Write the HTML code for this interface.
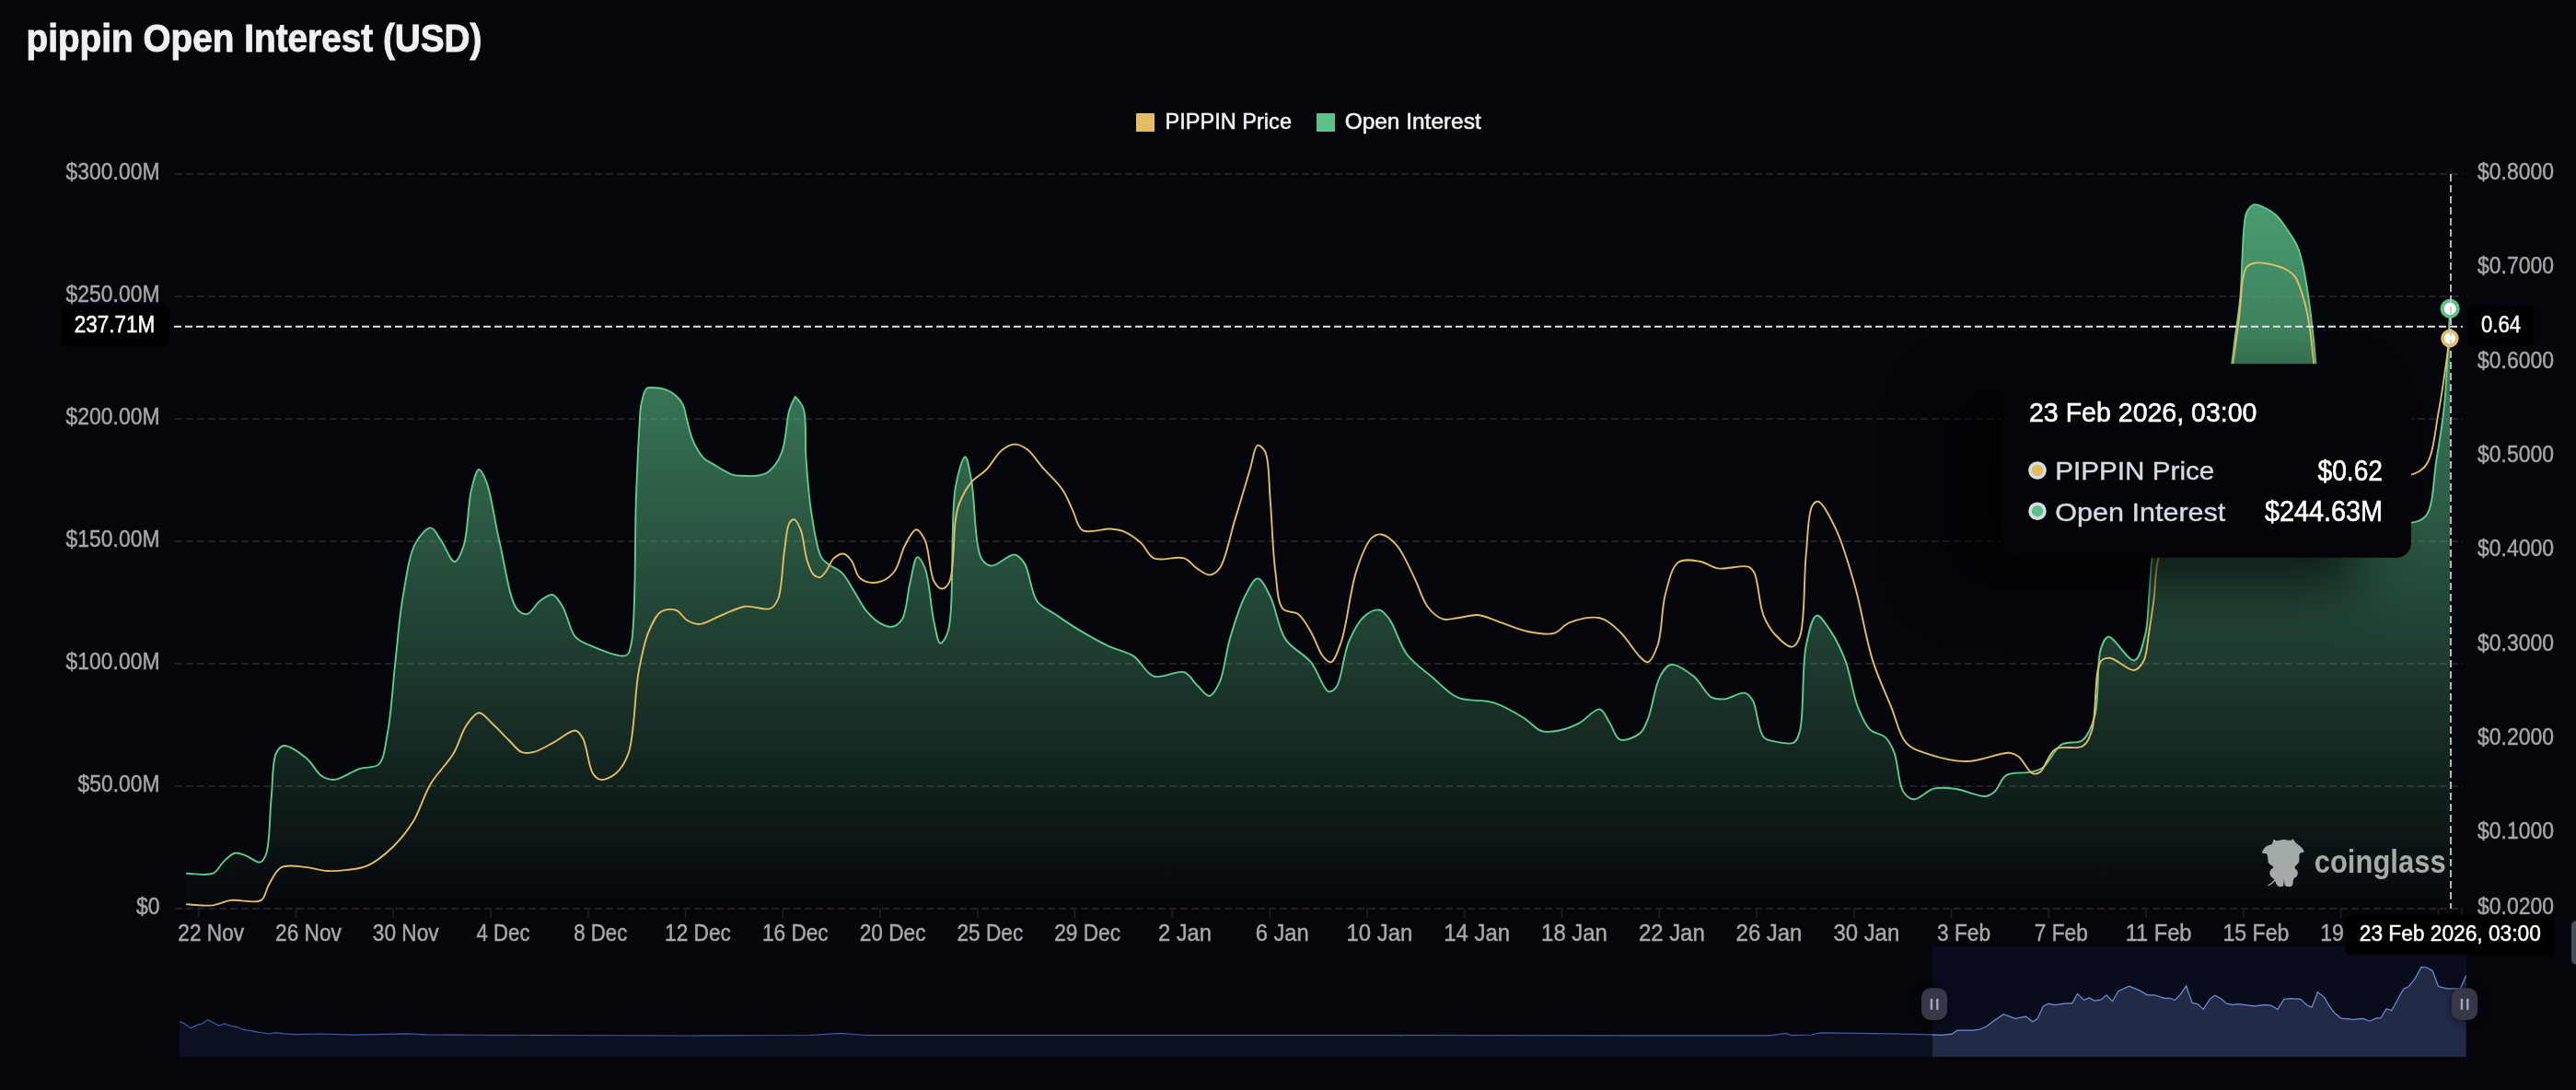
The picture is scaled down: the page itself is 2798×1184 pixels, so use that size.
<!DOCTYPE html><html><head><meta charset="utf-8"><title>pippin Open Interest (USD)</title><style>html,body{margin:0;padding:0;background:#05060b;width:2798px;height:1184px;overflow:hidden}svg{display:block}text{font-family:"Liberation Sans", sans-serif}</style></head><body><div style="will-change:transform;width:2798px;height:1184px"><svg width="2798" height="1184" viewBox="0 0 2798 1184"><defs><linearGradient id="oig" gradientUnits="userSpaceOnUse" x1="0" y1="222" x2="0" y2="987"><stop offset="0" stop-color="#5bc189" stop-opacity="0.8"/><stop offset="1" stop-color="#5bc189" stop-opacity="0"/></linearGradient><filter id="tts" x="-50%" y="-80%" width="200%" height="260%"><feGaussianBlur stdDeviation="32"/></filter><filter id="hs" x="-50%" y="-50%" width="200%" height="200%"><feGaussianBlur stdDeviation="5"/></filter><clipPath id="plotclip"><rect x="190" y="150" width="2472" height="840"/></clipPath></defs><rect x="0" y="0" width="2798" height="1184" fill="#05060b"/><text x="28.5" y="56.2" font-size="42.5" font-weight="700" fill="#eef0f5" stroke="#eef0f5" stroke-width="0.9" textLength="495" lengthAdjust="spacingAndGlyphs">pippin Open Interest (USD)</text><rect x="1234" y="123" width="20" height="20" rx="0.5" fill="#e3bd63"/><text x="1265.5" y="140" font-size="23.6" fill="#f4f4f4" stroke="#f4f4f4" stroke-width="0.5" textLength="137.5" lengthAdjust="spacingAndGlyphs">PIPPIN Price</text><rect x="1430" y="123" width="20" height="20" rx="0.5" fill="#5bc189"/><text x="1460.7" y="140" font-size="23.6" fill="#f4f4f4" stroke="#f4f4f4" stroke-width="0.5" textLength="148" lengthAdjust="spacingAndGlyphs">Open Interest</text><line x1="190" y1="189" x2="2675" y2="189" stroke="#202226" stroke-width="2" stroke-dasharray="8 4"/><line x1="190" y1="322" x2="2675" y2="322" stroke="#202226" stroke-width="2" stroke-dasharray="8 4"/><line x1="190" y1="455" x2="2675" y2="455" stroke="#202226" stroke-width="2" stroke-dasharray="8 4"/><line x1="190" y1="588" x2="2675" y2="588" stroke="#202226" stroke-width="2" stroke-dasharray="8 4"/><line x1="190" y1="721" x2="2675" y2="721" stroke="#202226" stroke-width="2" stroke-dasharray="8 4"/><line x1="190" y1="854" x2="2675" y2="854" stroke="#202226" stroke-width="2" stroke-dasharray="8 4"/><line x1="190" y1="987" x2="2675" y2="987" stroke="#202226" stroke-width="2" stroke-dasharray="8 4"/><text x="173.5" y="195.2" font-size="25.3" fill="#a6a6a6" stroke="#a6a6a6" stroke-width="0.45" text-anchor="end" textLength="102" lengthAdjust="spacingAndGlyphs">$300.00M</text><text x="173.5" y="328.2" font-size="25.3" fill="#a6a6a6" stroke="#a6a6a6" stroke-width="0.45" text-anchor="end" textLength="102" lengthAdjust="spacingAndGlyphs">$250.00M</text><text x="173.5" y="461.2" font-size="25.3" fill="#a6a6a6" stroke="#a6a6a6" stroke-width="0.45" text-anchor="end" textLength="102" lengthAdjust="spacingAndGlyphs">$200.00M</text><text x="173.5" y="594.2" font-size="25.3" fill="#a6a6a6" stroke="#a6a6a6" stroke-width="0.45" text-anchor="end" textLength="102" lengthAdjust="spacingAndGlyphs">$150.00M</text><text x="173.5" y="727.2" font-size="25.3" fill="#a6a6a6" stroke="#a6a6a6" stroke-width="0.45" text-anchor="end" textLength="102" lengthAdjust="spacingAndGlyphs">$100.00M</text><text x="173.5" y="860.2" font-size="25.3" fill="#a6a6a6" stroke="#a6a6a6" stroke-width="0.45" text-anchor="end" textLength="89" lengthAdjust="spacingAndGlyphs">$50.00M</text><text x="173.5" y="993.2" font-size="25.3" fill="#a6a6a6" stroke="#a6a6a6" stroke-width="0.45" text-anchor="end" textLength="25.6" lengthAdjust="spacingAndGlyphs">$0</text><text x="2691" y="194.8" font-size="25.3" fill="#a6a6a6" stroke="#a6a6a6" stroke-width="0.45" textLength="83" lengthAdjust="spacingAndGlyphs">$0.8000</text><text x="2691" y="297.2" font-size="25.3" fill="#a6a6a6" stroke="#a6a6a6" stroke-width="0.45" textLength="83" lengthAdjust="spacingAndGlyphs">$0.7000</text><text x="2691" y="399.5" font-size="25.3" fill="#a6a6a6" stroke="#a6a6a6" stroke-width="0.45" textLength="83" lengthAdjust="spacingAndGlyphs">$0.6000</text><text x="2691" y="501.9" font-size="25.3" fill="#a6a6a6" stroke="#a6a6a6" stroke-width="0.45" textLength="83" lengthAdjust="spacingAndGlyphs">$0.5000</text><text x="2691" y="604.2" font-size="25.3" fill="#a6a6a6" stroke="#a6a6a6" stroke-width="0.45" textLength="83" lengthAdjust="spacingAndGlyphs">$0.4000</text><text x="2691" y="706.6" font-size="25.3" fill="#a6a6a6" stroke="#a6a6a6" stroke-width="0.45" textLength="83" lengthAdjust="spacingAndGlyphs">$0.3000</text><text x="2691" y="809" font-size="25.3" fill="#a6a6a6" stroke="#a6a6a6" stroke-width="0.45" textLength="83" lengthAdjust="spacingAndGlyphs">$0.2000</text><text x="2691" y="911.3" font-size="25.3" fill="#a6a6a6" stroke="#a6a6a6" stroke-width="0.45" textLength="83" lengthAdjust="spacingAndGlyphs">$0.1000</text><text x="2691" y="993.2" font-size="25.3" fill="#a6a6a6" stroke="#a6a6a6" stroke-width="0.45" textLength="83" lengthAdjust="spacingAndGlyphs">$0.0200</text><line x1="215.7" y1="987" x2="215.7" y2="997" stroke="#1f2127" stroke-width="1.6"/><line x1="321.5" y1="987" x2="321.5" y2="997" stroke="#1f2127" stroke-width="1.6"/><line x1="427.2" y1="987" x2="427.2" y2="997" stroke="#1f2127" stroke-width="1.6"/><line x1="533" y1="987" x2="533" y2="997" stroke="#1f2127" stroke-width="1.6"/><line x1="638.8" y1="987" x2="638.8" y2="997" stroke="#1f2127" stroke-width="1.6"/><line x1="744.5" y1="987" x2="744.5" y2="997" stroke="#1f2127" stroke-width="1.6"/><line x1="850.3" y1="987" x2="850.3" y2="997" stroke="#1f2127" stroke-width="1.6"/><line x1="956.1" y1="987" x2="956.1" y2="997" stroke="#1f2127" stroke-width="1.6"/><line x1="1061.9" y1="987" x2="1061.9" y2="997" stroke="#1f2127" stroke-width="1.6"/><line x1="1167.6" y1="987" x2="1167.6" y2="997" stroke="#1f2127" stroke-width="1.6"/><line x1="1273.4" y1="987" x2="1273.4" y2="997" stroke="#1f2127" stroke-width="1.6"/><line x1="1379.2" y1="987" x2="1379.2" y2="997" stroke="#1f2127" stroke-width="1.6"/><line x1="1484.9" y1="987" x2="1484.9" y2="997" stroke="#1f2127" stroke-width="1.6"/><line x1="1590.7" y1="987" x2="1590.7" y2="997" stroke="#1f2127" stroke-width="1.6"/><line x1="1696.5" y1="987" x2="1696.5" y2="997" stroke="#1f2127" stroke-width="1.6"/><line x1="1802.2" y1="987" x2="1802.2" y2="997" stroke="#1f2127" stroke-width="1.6"/><line x1="1908" y1="987" x2="1908" y2="997" stroke="#1f2127" stroke-width="1.6"/><line x1="2013.8" y1="987" x2="2013.8" y2="997" stroke="#1f2127" stroke-width="1.6"/><line x1="2119.6" y1="987" x2="2119.6" y2="997" stroke="#1f2127" stroke-width="1.6"/><line x1="2225.3" y1="987" x2="2225.3" y2="997" stroke="#1f2127" stroke-width="1.6"/><line x1="2331.1" y1="987" x2="2331.1" y2="997" stroke="#1f2127" stroke-width="1.6"/><line x1="2436.9" y1="987" x2="2436.9" y2="997" stroke="#1f2127" stroke-width="1.6"/><line x1="2542.6" y1="987" x2="2542.6" y2="997" stroke="#1f2127" stroke-width="1.6"/><line x1="2648.4" y1="987" x2="2648.4" y2="997" stroke="#1f2127" stroke-width="1.6"/><line x1="2674" y1="987" x2="2674" y2="997" stroke="#1f2127" stroke-width="1.6"/><text x="229.2" y="1021.7" font-size="25" fill="#a8a8a8" stroke="#a8a8a8" stroke-width="0.45" text-anchor="middle" textLength="71.8" lengthAdjust="spacingAndGlyphs">22 Nov</text><text x="335" y="1021.7" font-size="25" fill="#a8a8a8" stroke="#a8a8a8" stroke-width="0.45" text-anchor="middle" textLength="71.8" lengthAdjust="spacingAndGlyphs">26 Nov</text><text x="440.7" y="1021.7" font-size="25" fill="#a8a8a8" stroke="#a8a8a8" stroke-width="0.45" text-anchor="middle" textLength="71.8" lengthAdjust="spacingAndGlyphs">30 Nov</text><text x="546.5" y="1021.7" font-size="25" fill="#a8a8a8" stroke="#a8a8a8" stroke-width="0.45" text-anchor="middle" textLength="58" lengthAdjust="spacingAndGlyphs">4 Dec</text><text x="652.3" y="1021.7" font-size="25" fill="#a8a8a8" stroke="#a8a8a8" stroke-width="0.45" text-anchor="middle" textLength="58" lengthAdjust="spacingAndGlyphs">8 Dec</text><text x="758" y="1021.7" font-size="25" fill="#a8a8a8" stroke="#a8a8a8" stroke-width="0.45" text-anchor="middle" textLength="71.8" lengthAdjust="spacingAndGlyphs">12 Dec</text><text x="863.8" y="1021.7" font-size="25" fill="#a8a8a8" stroke="#a8a8a8" stroke-width="0.45" text-anchor="middle" textLength="71.8" lengthAdjust="spacingAndGlyphs">16 Dec</text><text x="969.6" y="1021.7" font-size="25" fill="#a8a8a8" stroke="#a8a8a8" stroke-width="0.45" text-anchor="middle" textLength="71.8" lengthAdjust="spacingAndGlyphs">20 Dec</text><text x="1075.4" y="1021.7" font-size="25" fill="#a8a8a8" stroke="#a8a8a8" stroke-width="0.45" text-anchor="middle" textLength="71.8" lengthAdjust="spacingAndGlyphs">25 Dec</text><text x="1181.1" y="1021.7" font-size="25" fill="#a8a8a8" stroke="#a8a8a8" stroke-width="0.45" text-anchor="middle" textLength="71.8" lengthAdjust="spacingAndGlyphs">29 Dec</text><text x="1286.9" y="1021.7" font-size="25" fill="#a8a8a8" stroke="#a8a8a8" stroke-width="0.45" text-anchor="middle" textLength="58" lengthAdjust="spacingAndGlyphs">2 Jan</text><text x="1392.7" y="1021.7" font-size="25" fill="#a8a8a8" stroke="#a8a8a8" stroke-width="0.45" text-anchor="middle" textLength="58" lengthAdjust="spacingAndGlyphs">6 Jan</text><text x="1498.4" y="1021.7" font-size="25" fill="#a8a8a8" stroke="#a8a8a8" stroke-width="0.45" text-anchor="middle" textLength="71.8" lengthAdjust="spacingAndGlyphs">10 Jan</text><text x="1604.2" y="1021.7" font-size="25" fill="#a8a8a8" stroke="#a8a8a8" stroke-width="0.45" text-anchor="middle" textLength="71.8" lengthAdjust="spacingAndGlyphs">14 Jan</text><text x="1710" y="1021.7" font-size="25" fill="#a8a8a8" stroke="#a8a8a8" stroke-width="0.45" text-anchor="middle" textLength="71.8" lengthAdjust="spacingAndGlyphs">18 Jan</text><text x="1815.8" y="1021.7" font-size="25" fill="#a8a8a8" stroke="#a8a8a8" stroke-width="0.45" text-anchor="middle" textLength="71.8" lengthAdjust="spacingAndGlyphs">22 Jan</text><text x="1921.5" y="1021.7" font-size="25" fill="#a8a8a8" stroke="#a8a8a8" stroke-width="0.45" text-anchor="middle" textLength="71.8" lengthAdjust="spacingAndGlyphs">26 Jan</text><text x="2027.3" y="1021.7" font-size="25" fill="#a8a8a8" stroke="#a8a8a8" stroke-width="0.45" text-anchor="middle" textLength="71.8" lengthAdjust="spacingAndGlyphs">30 Jan</text><text x="2133.1" y="1021.7" font-size="25" fill="#a8a8a8" stroke="#a8a8a8" stroke-width="0.45" text-anchor="middle" textLength="58" lengthAdjust="spacingAndGlyphs">3 Feb</text><text x="2238.8" y="1021.7" font-size="25" fill="#a8a8a8" stroke="#a8a8a8" stroke-width="0.45" text-anchor="middle" textLength="58" lengthAdjust="spacingAndGlyphs">7 Feb</text><text x="2344.6" y="1021.7" font-size="25" fill="#a8a8a8" stroke="#a8a8a8" stroke-width="0.45" text-anchor="middle" textLength="71.8" lengthAdjust="spacingAndGlyphs">11 Feb</text><text x="2450.4" y="1021.7" font-size="25" fill="#a8a8a8" stroke="#a8a8a8" stroke-width="0.45" text-anchor="middle" textLength="71.8" lengthAdjust="spacingAndGlyphs">15 Feb</text><text x="2556.1" y="1021.7" font-size="25" fill="#a8a8a8" stroke="#a8a8a8" stroke-width="0.45" text-anchor="middle" textLength="71.8" lengthAdjust="spacingAndGlyphs">19 Feb</text><path d="M2457.2,925.3C2457.4,923.9 2459.9,920.7 2461.7,919.3C2463.4,917.9 2466.4,918.1 2467.8,916.7C2469,915.5 2468.9,912 2469.8,911.7C2470.5,911.5 2471.2,913 2472.3,913.2C2474.2,913.6 2477.7,912.1 2480.4,912C2483.1,911.9 2486.6,913.2 2488.4,912.7C2489.4,912.4 2489.9,911.1 2490.5,911.2C2491.3,911.3 2491.5,913.1 2492.5,914.2C2494.1,916 2497.7,918.2 2499.5,920.3C2500.9,921.9 2503,924.1 2502.6,925.3C2502.3,926.4 2499,926 2498,927.3C2496.7,929.1 2498.1,933.9 2497,936.4C2496.1,938.7 2492.6,940.2 2492.5,942C2492.4,943.6 2495.1,944.9 2495.5,946.5C2495.9,948.1 2495.7,950.2 2495,951.6C2494.3,952.9 2492.4,953.2 2491.5,954.6C2490.3,956.4 2491.1,961 2489.5,962.2C2488,963.4 2483.8,963.3 2482.4,962.2C2481,961.1 2481.3,955.6 2480.9,955.6C2480.5,955.6 2481.1,961.1 2479.9,962.2C2478.8,963.3 2475.8,963.5 2474.3,962.7C2472.5,961.7 2471.8,957.7 2470.3,955.6C2468.9,953.7 2466.3,952.5 2465.7,950.6C2465.1,948.9 2465.5,946.5 2466.2,945C2466.8,943.7 2469.3,943.1 2469.3,942C2469.3,940.6 2465.4,939.4 2464.2,937.4C2462.8,935 2463.8,929.5 2462.2,927.9C2461.1,926.8 2458.4,927.5 2457.7,926.8C2457.3,926.4 2457.1,925.9 2457.2,925.3Z" fill="#a8aaac"/><path d="M2471,956 C2469,958.5 2467,960.5 2463.5,961.8" fill="none" stroke="#a8aaac" stroke-width="1.3"/><text x="2513.7" y="948" font-size="35.5" font-weight="700" fill="#a8aaac" textLength="143" lengthAdjust="spacingAndGlyphs">coinglass</text><path d="M202.1,948.7C211.8,948.7 224.3,951.8 231.3,948.7C236.5,946.4 238.3,940.3 242.3,936.6C246.2,933 250.5,927.7 254.9,926.7C258.8,925.8 262.8,928 267,929.4C271.9,931.1 278.7,937.5 282.5,936.6C285.5,935.8 287.2,932.5 289,928C293.2,917.3 292.7,886.9 294.6,867.8C296.4,850.4 295.5,827.1 300,818C302.1,813.6 304.6,810.5 308.3,810C314.2,809.2 326,818.1 333,823.8C339.6,829.2 343.7,839.3 349.6,843C354,845.8 358.1,847.3 363.4,846.9C371.1,846.4 382.3,837.6 390.9,834.8C398.1,832.5 406.3,835 411.2,830.4C417.7,824.3 418.3,809.9 421,796C425,775.6 426.6,744.3 429.4,719.2C432.1,694.9 433.7,670.2 437.7,647.7C441.3,627.3 444.2,602.7 451.4,589.9C455.9,581.9 463.1,573.2 467.9,573.4C472.1,573.6 475.2,581.7 479,587C483.8,593.6 489.4,610.3 493.8,610.2C497.5,610.1 501,600.6 503.7,592.6C508.4,578.7 508.2,547 512,532C514.3,522.7 517.1,510.3 520.2,510C522.7,509.8 525.9,517.2 528.5,523.8C533.7,537 537,565.1 542.2,587C547.9,610.8 553.1,651 561.5,661.4C564.9,665.6 568.8,667.6 572.5,667C577.1,666.3 581.4,656.6 586.3,653C590.6,649.8 596,645.2 600,646C604.2,646.8 607.5,653.1 611,658.7C616,666.8 618.9,684.8 624.8,691.7C628.8,696.3 632.5,697.4 638.5,700C648.4,704.3 672.7,715.2 679.8,712C683.8,710.2 683.9,706.6 685.5,700C691.1,677.1 689.2,581 691,537.6C692.2,508.6 693.2,483.2 694.4,465C695.1,454 695,446.3 696.6,438.6C697.9,432.4 699.4,424.5 702.1,422.1C703.6,420.7 705.3,421.1 707.6,421C711.4,420.9 718.4,421.6 723,423.2C727.1,424.7 730.9,427 734,429.8C737.1,432.5 739.8,435.7 741.8,439.7C744.1,444.3 744.6,450.4 746.2,456.2C747.9,462.5 749.5,470.3 751.7,476.1C753.5,481 755.6,485.2 758,489C760.1,492.4 762.2,495.6 764.9,498.1C767.5,500.4 770.1,501.5 773.7,503.6C779.3,506.9 789.7,513.8 795.7,515.7C799.5,516.9 801.9,516.6 805.6,516.8C810.4,517.1 817.2,517.5 822.1,516.8C826.2,516.2 829.7,515.6 833.1,513.5C837.2,510.9 841.3,506 844.2,501.4C847.2,496.8 848.9,492.5 850.8,486C853.8,475.8 854.4,455.2 857.4,445.2C859.3,439 863.9,430.8 863.9,430.8C863.9,430.8 863.9,430.8 863.9,430.8C863.9,430.8 870.6,437.8 872.7,444C876.5,455.3 874.1,478.4 875.4,496.3C876.8,515.1 878,535.5 880.9,554.1C883.6,571.7 886.8,595.7 891.9,605.1C894.3,609.5 896.9,610.7 900.2,613.3C904.1,616.3 909.8,617.6 914,621.6C919.2,626.6 923.2,635.2 927.7,642.2C932.3,649.4 936.4,658.2 941.5,664.2C945.8,669.3 950.4,673.8 955.3,676.6C959.6,679 964.9,681.5 969,680.8C973.1,680.1 977.1,677.1 980,672.5C984.9,664.8 985.3,645.9 988.3,634C990.9,623.6 993.1,605.6 996.5,605.1C998.9,604.7 1002.4,611.5 1004.8,617.5C1009.5,629.4 1011,660.3 1014.4,675.2C1016.6,684.8 1018.3,698.2 1021.3,698.7C1023.6,699.1 1027.3,693.3 1029.6,686.3C1037.1,663.7 1031.8,562.1 1037.8,529.4C1040.6,514 1045.4,496.2 1048.4,496.3C1051,496.4 1052.9,510.2 1055,521C1058.9,540.8 1058.4,593.4 1066,606.4C1069,611.6 1072.4,614.2 1077,614.6C1083.5,615.2 1095.4,601.7 1101.8,602.5C1106.4,603.1 1109.5,607 1112.8,611.9C1118.5,620.4 1119.6,643.8 1126.6,653.2C1131.7,660.2 1138.9,662.3 1145.8,667C1153.5,672.3 1161.6,678 1170.6,683.4C1180.7,689.5 1192.9,696.6 1203.6,701.6C1213,706.1 1222.9,707.2 1231.1,712.6C1239.5,718.1 1244.2,731.6 1253.2,734.6C1262.5,737.7 1278,727.4 1286.2,730.2C1292.5,732.3 1295.3,739.6 1300,744C1304.5,748.2 1309.6,756.4 1313.7,756C1317.8,755.6 1321.6,747.9 1324.7,741.2C1329.8,730.3 1331.2,709.9 1335.7,694.4C1340.3,678.7 1346,659.6 1352.2,647.7C1356.5,639.5 1361.4,628.4 1366,628.4C1370.6,628.4 1375.4,639.5 1379.7,647.7C1385.9,659.6 1388,682.1 1396.3,694.4C1403.4,705.1 1416,709.8 1423.8,719.2C1431.6,728.7 1437.2,749.5 1443,751.1C1445.9,751.9 1448.8,749.8 1451.3,746.7C1457.2,739.4 1459.1,711 1465,697.2C1469.7,686.3 1475,675.5 1481.6,669.7C1486.5,665.4 1493.3,661.7 1498,662.5C1502.3,663.2 1505.3,667.5 1509,672.4C1515.3,680.7 1520.1,700.2 1528.3,711C1535.9,721 1546.6,727.8 1555.9,735.7C1565,743.4 1572.7,753.1 1583.4,757.7C1594.6,762.5 1609.8,759.4 1621.9,763.2C1633.6,766.9 1645.6,774 1654.9,779.7C1662.4,784.3 1667.4,791.8 1674.2,794C1680.3,795.9 1686.9,794.8 1693.4,793.5C1700.6,792.1 1708.4,789 1715.5,785.3C1723.1,781.4 1731.8,769.4 1737.5,770.4C1742.3,771.2 1744.9,780 1748.5,785.3C1752.3,791 1754.2,801.4 1759.5,803.4C1765,805.5 1776.4,800.6 1781.5,796.3C1786,792.6 1787.2,787.5 1790,780.8C1794.6,769.7 1797.5,744.8 1803.2,734.6C1806.6,728.5 1809.8,722.9 1814.8,722C1821.2,720.9 1832.2,728.9 1839.5,734.6C1847.1,740.6 1852.7,754.1 1859.3,757.7C1863.7,760.1 1867.5,759.8 1872.5,759.4C1879.2,758.9 1890.1,751.4 1895.6,752.8C1899.4,753.8 1901.4,756.8 1903.9,761C1908.6,768.9 1909.3,793.9 1915.5,800.6C1919.1,804.5 1923.8,804.6 1928.7,805.6C1934.5,806.8 1944.1,809.1 1948.5,806.6C1952.2,804.5 1953.2,800.4 1955,794C1959.6,777.6 1957,724.4 1961.7,701.6C1964.6,687.6 1968,669.6 1973.2,668.6C1977.3,667.8 1983.4,678.3 1988.1,685.1C1994.1,693.9 1999.9,705.7 2004.6,718.1C2010.1,732.7 2012.5,754.2 2017.8,767.6C2021.7,777.5 2025.3,786.8 2031,792.4C2035.6,796.9 2043.1,796.6 2047.5,800.6C2052,804.7 2054.5,810 2057.4,817.1C2061.7,827.8 2061.8,851.7 2067.3,860C2070.4,864.7 2074.3,868 2078.9,868.3C2084.9,868.7 2092.8,858.6 2100.3,856.7C2107.6,854.8 2115.1,855.7 2123.4,856.7C2133.5,857.9 2148.8,865.9 2156.5,865C2160.9,864.5 2163.2,862.7 2166.4,860C2171,856.1 2173.4,845.5 2179.6,841.9C2186.3,837.9 2198.8,840.4 2206,838.6C2211.2,837.3 2214.8,836.8 2219.2,833.6C2225.8,828.8 2231.2,813.8 2239,808.9C2245.8,804.7 2256.2,808.5 2262.1,803.9C2268.7,798.8 2272.1,788.9 2275.3,777.5C2280.4,759.6 2277.1,719.1 2281.9,704.9C2284.1,698.4 2286.2,692.2 2290.2,691.7C2296.5,690.9 2311.4,718.9 2318.2,717.4C2324.4,716 2327.7,698.8 2330.3,688.4C2333.2,677.1 2332.8,664.6 2334,651.7C2335.3,637.3 2335.7,619 2337.6,605.9C2339,596 2340.1,589.4 2343,580C2346.8,567.9 2352.3,554.3 2360,540C2369.9,521.6 2390.1,499.7 2400,480C2408.5,463.1 2413.4,448.2 2418,430C2423.3,409.2 2425.6,381.3 2428.4,361.4C2430.5,346.2 2432.3,334.5 2433.5,321C2434.7,307.6 2434.8,293.6 2435.5,280.7C2436.1,268.8 2436.4,255.7 2437.5,246.4C2438.3,240 2438.3,234.5 2440.5,230.3C2442.4,226.8 2445.4,223 2448.6,222.2C2452,221.4 2456.8,224.3 2460.7,226.2C2464.9,228.2 2469,230.7 2472.8,234.3C2477.2,238.5 2481.2,244.9 2484.9,250.4C2488.5,255.7 2492.3,260.7 2495,266.6C2497.8,272.8 2499.3,279.1 2501.1,286.8C2503.4,296.6 2505.3,309.1 2507.1,321C2509,333.9 2510.5,346.7 2512.2,361.4C2514.2,379.1 2515.6,399 2518,420C2520.8,444.6 2522.4,477.4 2528,500C2532.3,517.4 2535.6,534 2545,545C2553.6,555 2567.6,561.2 2580,565C2592.3,568.7 2609,569.9 2619,567.9C2625.9,566.5 2631.2,565.3 2635.5,559.6C2643.3,549.2 2643.2,519.1 2646.5,499C2649.7,479.2 2652.7,462.5 2655,440C2658,410.1 2659.1,370.2 2661.2,335.3L2661.2,987 L202.1,987 Z" fill="url(#oig)"/><path d="M202.1,948.7C211.8,948.7 224.3,951.8 231.3,948.7C236.5,946.4 238.3,940.3 242.3,936.6C246.2,933 250.5,927.7 254.9,926.7C258.8,925.8 262.8,928 267,929.4C271.9,931.1 278.7,937.5 282.5,936.6C285.5,935.8 287.2,932.5 289,928C293.2,917.3 292.7,886.9 294.6,867.8C296.4,850.4 295.5,827.1 300,818C302.1,813.6 304.6,810.5 308.3,810C314.2,809.2 326,818.1 333,823.8C339.6,829.2 343.7,839.3 349.6,843C354,845.8 358.1,847.3 363.4,846.9C371.1,846.4 382.3,837.6 390.9,834.8C398.1,832.5 406.3,835 411.2,830.4C417.7,824.3 418.3,809.9 421,796C425,775.6 426.6,744.3 429.4,719.2C432.1,694.9 433.7,670.2 437.7,647.7C441.3,627.3 444.2,602.7 451.4,589.9C455.9,581.9 463.1,573.2 467.9,573.4C472.1,573.6 475.2,581.7 479,587C483.8,593.6 489.4,610.3 493.8,610.2C497.5,610.1 501,600.6 503.7,592.6C508.4,578.7 508.2,547 512,532C514.3,522.7 517.1,510.3 520.2,510C522.7,509.8 525.9,517.2 528.5,523.8C533.7,537 537,565.1 542.2,587C547.9,610.8 553.1,651 561.5,661.4C564.9,665.6 568.8,667.6 572.5,667C577.1,666.3 581.4,656.6 586.3,653C590.6,649.8 596,645.2 600,646C604.2,646.8 607.5,653.1 611,658.7C616,666.8 618.9,684.8 624.8,691.7C628.8,696.3 632.5,697.4 638.5,700C648.4,704.3 672.7,715.2 679.8,712C683.8,710.2 683.9,706.6 685.5,700C691.1,677.1 689.2,581 691,537.6C692.2,508.6 693.2,483.2 694.4,465C695.1,454 695,446.3 696.6,438.6C697.9,432.4 699.4,424.5 702.1,422.1C703.6,420.7 705.3,421.1 707.6,421C711.4,420.9 718.4,421.6 723,423.2C727.1,424.7 730.9,427 734,429.8C737.1,432.5 739.8,435.7 741.8,439.7C744.1,444.3 744.6,450.4 746.2,456.2C747.9,462.5 749.5,470.3 751.7,476.1C753.5,481 755.6,485.2 758,489C760.1,492.4 762.2,495.6 764.9,498.1C767.5,500.4 770.1,501.5 773.7,503.6C779.3,506.9 789.7,513.8 795.7,515.7C799.5,516.9 801.9,516.6 805.6,516.8C810.4,517.1 817.2,517.5 822.1,516.8C826.2,516.2 829.7,515.6 833.1,513.5C837.2,510.9 841.3,506 844.2,501.4C847.2,496.8 848.9,492.5 850.8,486C853.8,475.8 854.4,455.2 857.4,445.2C859.3,439 863.9,430.8 863.9,430.8C863.9,430.8 863.9,430.8 863.9,430.8C863.9,430.8 870.6,437.8 872.7,444C876.5,455.3 874.1,478.4 875.4,496.3C876.8,515.1 878,535.5 880.9,554.1C883.6,571.7 886.8,595.7 891.9,605.1C894.3,609.5 896.9,610.7 900.2,613.3C904.1,616.3 909.8,617.6 914,621.6C919.2,626.6 923.2,635.2 927.7,642.2C932.3,649.4 936.4,658.2 941.5,664.2C945.8,669.3 950.4,673.8 955.3,676.6C959.6,679 964.9,681.5 969,680.8C973.1,680.1 977.1,677.1 980,672.5C984.9,664.8 985.3,645.9 988.3,634C990.9,623.6 993.1,605.6 996.5,605.1C998.9,604.7 1002.4,611.5 1004.8,617.5C1009.5,629.4 1011,660.3 1014.4,675.2C1016.6,684.8 1018.3,698.2 1021.3,698.7C1023.6,699.1 1027.3,693.3 1029.6,686.3C1037.1,663.7 1031.8,562.1 1037.8,529.4C1040.6,514 1045.4,496.2 1048.4,496.3C1051,496.4 1052.9,510.2 1055,521C1058.9,540.8 1058.4,593.4 1066,606.4C1069,611.6 1072.4,614.2 1077,614.6C1083.5,615.2 1095.4,601.7 1101.8,602.5C1106.4,603.1 1109.5,607 1112.8,611.9C1118.5,620.4 1119.6,643.8 1126.6,653.2C1131.7,660.2 1138.9,662.3 1145.8,667C1153.5,672.3 1161.6,678 1170.6,683.4C1180.7,689.5 1192.9,696.6 1203.6,701.6C1213,706.1 1222.9,707.2 1231.1,712.6C1239.5,718.1 1244.2,731.6 1253.2,734.6C1262.5,737.7 1278,727.4 1286.2,730.2C1292.5,732.3 1295.3,739.6 1300,744C1304.5,748.2 1309.6,756.4 1313.7,756C1317.8,755.6 1321.6,747.9 1324.7,741.2C1329.8,730.3 1331.2,709.9 1335.7,694.4C1340.3,678.7 1346,659.6 1352.2,647.7C1356.5,639.5 1361.4,628.4 1366,628.4C1370.6,628.4 1375.4,639.5 1379.7,647.7C1385.9,659.6 1388,682.1 1396.3,694.4C1403.4,705.1 1416,709.8 1423.8,719.2C1431.6,728.7 1437.2,749.5 1443,751.1C1445.9,751.9 1448.8,749.8 1451.3,746.7C1457.2,739.4 1459.1,711 1465,697.2C1469.7,686.3 1475,675.5 1481.6,669.7C1486.5,665.4 1493.3,661.7 1498,662.5C1502.3,663.2 1505.3,667.5 1509,672.4C1515.3,680.7 1520.1,700.2 1528.3,711C1535.9,721 1546.6,727.8 1555.9,735.7C1565,743.4 1572.7,753.1 1583.4,757.7C1594.6,762.5 1609.8,759.4 1621.9,763.2C1633.6,766.9 1645.6,774 1654.9,779.7C1662.4,784.3 1667.4,791.8 1674.2,794C1680.3,795.9 1686.9,794.8 1693.4,793.5C1700.6,792.1 1708.4,789 1715.5,785.3C1723.1,781.4 1731.8,769.4 1737.5,770.4C1742.3,771.2 1744.9,780 1748.5,785.3C1752.3,791 1754.2,801.4 1759.5,803.4C1765,805.5 1776.4,800.6 1781.5,796.3C1786,792.6 1787.2,787.5 1790,780.8C1794.6,769.7 1797.5,744.8 1803.2,734.6C1806.6,728.5 1809.8,722.9 1814.8,722C1821.2,720.9 1832.2,728.9 1839.5,734.6C1847.1,740.6 1852.7,754.1 1859.3,757.7C1863.7,760.1 1867.5,759.8 1872.5,759.4C1879.2,758.9 1890.1,751.4 1895.6,752.8C1899.4,753.8 1901.4,756.8 1903.9,761C1908.6,768.9 1909.3,793.9 1915.5,800.6C1919.1,804.5 1923.8,804.6 1928.7,805.6C1934.5,806.8 1944.1,809.1 1948.5,806.6C1952.2,804.5 1953.2,800.4 1955,794C1959.6,777.6 1957,724.4 1961.7,701.6C1964.6,687.6 1968,669.6 1973.2,668.6C1977.3,667.8 1983.4,678.3 1988.1,685.1C1994.1,693.9 1999.9,705.7 2004.6,718.1C2010.1,732.7 2012.5,754.2 2017.8,767.6C2021.7,777.5 2025.3,786.8 2031,792.4C2035.6,796.9 2043.1,796.6 2047.5,800.6C2052,804.7 2054.5,810 2057.4,817.1C2061.7,827.8 2061.8,851.7 2067.3,860C2070.4,864.7 2074.3,868 2078.9,868.3C2084.9,868.7 2092.8,858.6 2100.3,856.7C2107.6,854.8 2115.1,855.7 2123.4,856.7C2133.5,857.9 2148.8,865.9 2156.5,865C2160.9,864.5 2163.2,862.7 2166.4,860C2171,856.1 2173.4,845.5 2179.6,841.9C2186.3,837.9 2198.8,840.4 2206,838.6C2211.2,837.3 2214.8,836.8 2219.2,833.6C2225.8,828.8 2231.2,813.8 2239,808.9C2245.8,804.7 2256.2,808.5 2262.1,803.9C2268.7,798.8 2272.1,788.9 2275.3,777.5C2280.4,759.6 2277.1,719.1 2281.9,704.9C2284.1,698.4 2286.2,692.2 2290.2,691.7C2296.5,690.9 2311.4,718.9 2318.2,717.4C2324.4,716 2327.7,698.8 2330.3,688.4C2333.2,677.1 2332.8,664.6 2334,651.7C2335.3,637.3 2335.7,619 2337.6,605.9C2339,596 2340.1,589.4 2343,580C2346.8,567.9 2352.3,554.3 2360,540C2369.9,521.6 2390.1,499.7 2400,480C2408.5,463.1 2413.4,448.2 2418,430C2423.3,409.2 2425.6,381.3 2428.4,361.4C2430.5,346.2 2432.3,334.5 2433.5,321C2434.7,307.6 2434.8,293.6 2435.5,280.7C2436.1,268.8 2436.4,255.7 2437.5,246.4C2438.3,240 2438.3,234.5 2440.5,230.3C2442.4,226.8 2445.4,223 2448.6,222.2C2452,221.4 2456.8,224.3 2460.7,226.2C2464.9,228.2 2469,230.7 2472.8,234.3C2477.2,238.5 2481.2,244.9 2484.9,250.4C2488.5,255.7 2492.3,260.7 2495,266.6C2497.8,272.8 2499.3,279.1 2501.1,286.8C2503.4,296.6 2505.3,309.1 2507.1,321C2509,333.9 2510.5,346.7 2512.2,361.4C2514.2,379.1 2515.6,399 2518,420C2520.8,444.6 2522.4,477.4 2528,500C2532.3,517.4 2535.6,534 2545,545C2553.6,555 2567.6,561.2 2580,565C2592.3,568.7 2609,569.9 2619,567.9C2625.9,566.5 2631.2,565.3 2635.5,559.6C2643.3,549.2 2643.2,519.1 2646.5,499C2649.7,479.2 2652.7,462.5 2655,440C2658,410.1 2659.1,370.2 2661.2,335.3" fill="none" stroke="#5ecb91" stroke-width="1.9" stroke-linejoin="round"/><path d="M202.1,982.3C211.8,982.7 222.7,984.4 231.3,983.4C238.4,982.5 243.2,978.9 250.5,977.9C260,976.6 276.8,982.1 283.6,977.9C288.7,974.8 288.4,967 291.8,961.4C295.6,955.1 299.1,945.4 305.6,942.1C312.6,938.5 324.5,941.3 333.1,942.1C340.9,942.8 347.7,945.5 355.1,946C362.4,946.5 369.7,945.8 377,944.9C384.4,944 391.7,943.7 399.1,940.4C408.2,936.3 418.5,927.9 426.7,920C435,912 442.2,903.1 448.7,892.6C456.1,880.6 460.3,863.9 467.9,851.3C475.1,839.3 486.1,829.4 492.7,818.3C498.6,808.3 501.1,795.8 506.5,788C510.6,782 515.5,774.5 520.2,774.2C524.7,773.9 529.1,780.9 534,785.3C540,790.7 547.3,798.8 553.2,804.5C558.1,809.2 562,815.4 567,817.2C571.3,818.8 575.7,817.9 580.7,816.6C587.4,814.9 595.5,809.4 602.8,805.6C610.2,801.7 619.4,792.7 624.8,793.5C628.5,794 630.5,797.6 633,801.8C637.6,809.6 639.2,833.1 644,840.3C646.5,844 648.9,846.4 652.3,846.9C656.7,847.5 664.1,844.3 668.8,840.3C674.5,835.5 678.9,828.6 682.6,818.3C689.4,799.2 689.1,754.4 693.6,730.2C696.8,712.9 699.6,698 704.6,686.2C708.4,677.3 712.4,667.7 718.3,664.2C723,661.4 730.1,661.3 734.8,663C739.3,664.6 741.7,671 745.9,673.5C750,675.9 754.4,678.2 759.6,678C766.7,677.8 776.1,671.2 784.4,668C792.6,664.8 800.6,659.9 809.2,658.7C818,657.5 830.8,663.7 836.9,661C841.2,659.2 843,655.8 845.2,650.5C849.6,640 849.7,613.2 852,598.2C853.8,586.7 854.2,572.9 857.5,567.9C859,565.6 861.3,563.9 863,564.3C865.5,564.9 867.9,571 869.9,576.2C873,584.3 873.9,600.4 876.8,609.2C878.8,615.3 880.7,621.4 883.7,624.3C885.7,626.2 888.4,627.5 890.6,627.1C893.1,626.6 895.3,623.1 897.5,620.2C900.4,616.5 902.2,609.6 905.7,606.4C908.7,603.7 913,601 916.2,601.5C919.4,602 922.4,605.7 925,609.2C928.3,613.7 929.4,623.2 933.2,627.1C936.2,630.2 940.2,631.9 944.2,632.6C948.4,633.4 953.6,633 958,631.2C962.9,629.2 968,625.4 971.8,620.2C976.8,613.5 978.5,600.6 982.8,592.7C986.5,586 991.3,575.4 995.2,575.3C998.5,575.2 1002.1,581.5 1004.8,587.2C1009.4,596.9 1009.7,622.7 1014.4,631.2C1016.8,635.6 1019.9,639.4 1022.7,639.5C1025.4,639.6 1028.8,636.8 1031,632.6C1036.6,622.1 1035.5,580.1 1037.8,565.2C1039,557.8 1039.1,554.5 1041.3,548.6C1044.1,541 1049.5,530.5 1055,523.8C1059.8,518 1066.3,515.4 1071.5,510C1077.3,504 1082.2,493.8 1088,489.2C1092.4,485.7 1097.2,482.8 1101.8,482.6C1106.4,482.4 1111.2,484.8 1115.6,488C1121.4,492.1 1126.1,500.5 1132,507.3C1138.8,515.1 1148.4,523.6 1154.1,532C1159,539.2 1161.4,546.7 1165.1,554.1C1168.7,561.4 1169.8,572.5 1176,576.1C1182.9,580.1 1198.3,573.9 1206.4,574.5C1211.9,574.9 1215.3,575.3 1220.1,577.2C1226.2,579.7 1233.8,584.9 1239.4,589.9C1244.8,594.7 1246.7,603.4 1253.2,606.4C1261.3,610.2 1277.9,603.5 1286.2,606.4C1292.3,608.5 1295.3,614.3 1300,617.4C1304.4,620.3 1309.4,624.7 1313.7,624.5C1317.6,624.3 1321.4,621.8 1324.7,617.4C1331.5,608.4 1335.8,582.8 1341.2,565.1C1346.8,547 1353.1,525 1357.7,510C1360.9,499.6 1362.3,484.8 1366,483.7C1368.3,483 1372.1,486.7 1374.2,490.8C1378.9,499.8 1378,523.9 1379.7,543C1381.7,566.2 1382.3,598.5 1385.2,620.1C1387.4,636.1 1387.2,654.2 1393.5,661.4C1397.5,666 1405.2,663.5 1410,667C1415.6,671.1 1419.5,679 1423.8,686.2C1428.7,694.4 1432.7,708.3 1437.5,713.7C1440.2,716.8 1443.2,719.9 1445.8,719.2C1449.9,718.1 1453.3,707 1456.8,697.2C1463,679.6 1466.5,640.6 1473.3,620.1C1478.1,605.6 1483.5,590.1 1489.8,584.4C1493.2,581.3 1496.9,579.9 1500.8,580.5C1505.9,581.3 1512.2,586.7 1517.3,592.6C1524.5,600.9 1530.9,616.9 1536.6,628.4C1541.8,638.8 1544.6,651 1550.4,658.7C1555.1,664.8 1561,670.5 1566.9,672.4C1572.1,674.1 1577.5,671.9 1583.4,671.3C1590.2,670.6 1598.1,667.4 1605.4,668C1612.8,668.6 1619.3,672.5 1627.4,675.2C1637.3,678.5 1649.8,684.2 1660.4,686.2C1669.9,688 1680.3,690 1688,687.8C1694.6,685.9 1697.7,679 1704.5,676.3C1713.3,672.8 1728,669.1 1737.5,671.3C1746,673.2 1752.6,679.8 1759.5,686.2C1767.4,693.5 1775.6,708.3 1781.5,713.7C1784.7,716.6 1787.2,719.8 1789.8,719.2C1793.7,718.3 1797.9,708.4 1800.8,700C1805.4,686.7 1804.6,660.8 1809,644.9C1812.6,631.9 1815.5,616.1 1823,610.8C1828.9,606.6 1838.8,608.6 1846.1,609.8C1853.1,610.9 1858.3,616.2 1865.9,617.4C1875.4,618.9 1892.5,613.2 1899,615.7C1902.4,617 1903.5,618.7 1905.5,622.3C1909.9,630.5 1910.6,656.4 1915.5,668.6C1919.1,677.5 1923.2,684.2 1928.7,690C1933.8,695.4 1942.2,703.3 1946.8,702.6C1950.4,702 1952.8,697.6 1955,691.7C1960.7,676.7 1959.1,628.3 1961.7,602.5C1963.7,582.6 1963.7,557.6 1968.3,549.7C1970.1,546.6 1972.4,544.3 1974.9,544.8C1980.2,545.8 1988.8,563.6 1994.7,576.1C2002.4,592.4 2008.3,614 2014.5,635.6C2021.7,660.7 2026.7,694.3 2034.3,718.1C2040.3,736.9 2047.7,752 2054.1,767.6C2059.8,781.6 2062.6,798.6 2070.6,807.2C2076.8,813.9 2084.6,815.7 2093.7,818.8C2105.6,822.8 2122,827.1 2136.6,827C2151.7,826.9 2173.2,816.8 2182.9,817.8C2187.5,818.3 2189.5,819.6 2192.8,822.1C2197.7,825.8 2202.9,838.5 2207.6,840.2C2210.4,841.2 2213.1,840.5 2215.9,838.6C2221.2,835.1 2224.7,818.5 2232.4,813.8C2240.1,809.1 2255.4,814.8 2262.1,810.5C2267.5,807.1 2269.2,801.9 2272,794C2277.5,778.2 2274.5,727.1 2281.9,718.1C2284.6,714.8 2287.8,714.5 2291.8,714.8C2298.6,715.3 2311.7,729.1 2318.2,728C2322.7,727.3 2325.9,722.6 2328.4,717.8C2332.1,710.9 2332.3,698.8 2334,688.4C2335.9,676.9 2337.7,664.6 2339.4,651.7C2341.3,637.3 2340.5,622.3 2344.5,605.9C2349.5,585.6 2358.8,558.4 2370,540C2379.7,524 2396.7,515.8 2405,500C2413.9,482.9 2416.6,458.6 2420,440C2422.9,424.1 2423.4,410.9 2425.4,395.3C2427.6,378.1 2430.6,357.9 2432.5,341.2C2434.2,326.8 2434.4,310.1 2436.5,300.9C2437.6,296 2438.2,292.3 2440.5,289.8C2442.5,287.6 2445.3,286.5 2448.6,285.8C2453,284.9 2459.1,285.7 2464.7,286.8C2471.1,288.1 2479.9,290.9 2484.9,293.8C2488.5,295.9 2490.6,297.6 2493,300.9C2496.4,305.6 2498.7,313.5 2501.1,321C2503.9,330 2506.2,340.2 2508.1,351.3C2510.4,364.5 2511.4,379.2 2513.2,395.3C2515.4,414.8 2515.6,441.3 2520,460C2523.6,475.2 2525.5,491 2535,500C2545,509.5 2565.4,511.5 2580,514C2593.3,516.3 2609.1,518.4 2619,515.6C2626.1,513.6 2631,511.1 2635.5,504.6C2643.4,493.2 2645.2,465.4 2649.3,444C2653.8,420.1 2657,393.1 2660.8,367.6" fill="none" stroke="#e3bd63" stroke-width="1.9" stroke-linejoin="round"/><line x1="189" y1="354.8" x2="2675" y2="354.8" stroke="#e6e6e6" stroke-width="2" stroke-dasharray="8 4"/><circle cx="2661.2" cy="335.3" r="8.6" fill="#ffffff" stroke="#5bc189" stroke-width="4"/><circle cx="2660.9" cy="367.6" r="7.9" fill="#ffffff" stroke="#e3bd63" stroke-width="3.8"/><line x1="2662" y1="189" x2="2662" y2="987" stroke="#c8c8c8" stroke-opacity="0.9" stroke-width="2" stroke-dasharray="8 4"/><path d="M195,1109.5 L200.1,1111.8 L207.1,1116.9 L214.1,1113.4 L219.9,1111.8 L225.7,1107.6 L238,1114.1 L244.3,1111.8 L251.3,1114.6 L257.2,1115.3 L264.1,1118.3 L271.1,1119.3 L280.4,1121.1 L292.1,1123 L300.2,1121.6 L308.4,1122.8 L320,1123.7 L348,1123 L383,1124.2 L441.2,1122.8 L462.1,1123.9 L499.4,1124.2 L750,1125 L880,1124.5 L913,1122.3 L940,1124.5 L1500,1124.5 L1900,1124.9 L1922,1124.9 L1939.7,1122.4 L1945.6,1124.6 L1967.5,1124 L1977.6,1121.9 L2018,1122.4 L2052,1122.9 L2090,1123.6 L2108.6,1124.3 L2120.3,1123.2 L2126.1,1119.2 L2143.6,1119.2 L2150.6,1118 L2157.6,1115 L2164.5,1109.7 L2176.2,1101.7 L2189,1106.4 L2200.6,1104.1 L2207.6,1109.7 L2213,1106.9 L2219.3,1092.9 L2225.1,1090.1 L2232.1,1091.7 L2243.7,1089.9 L2250.7,1089.9 L2256.6,1079.4 L2263.5,1086.4 L2269.4,1084 L2275.2,1087.1 L2282.2,1085.9 L2288,1080.8 L2294.5,1087.8 L2300.8,1076.6 L2312.5,1071.2 L2324.1,1075.9 L2332.3,1080.8 L2340.4,1080.8 L2350.9,1084.3 L2356.7,1084.3 L2362.5,1086.4 L2368.4,1080.1 L2374.6,1070.8 L2381.2,1089.4 L2387,1090.6 L2393.3,1096.4 L2399.8,1085.9 L2405.6,1081.2 L2412.6,1084.7 L2418.4,1090.1 L2425.4,1091.3 L2431.3,1090.6 L2448.7,1092.9 L2460.4,1091.3 L2467.4,1092.4 L2473.9,1096.4 L2480.9,1085.4 L2488.3,1084.7 L2498.8,1085.4 L2505.8,1091.7 L2511.1,1094.1 L2517.4,1077.8 L2524.4,1083.1 L2530.2,1092.9 L2536.1,1100.6 L2543,1106.2 L2555.9,1107.3 L2566.4,1106.4 L2574,1109.2 L2580.3,1106.2 L2586.2,1105.7 L2592,1095.7 L2597.8,1097.6 L2610.6,1074.3 L2616.5,1071.5 L2623.4,1062.6 L2630,1050.5 L2636.2,1051 L2642.1,1054.5 L2648.6,1071.5 L2658.4,1073.8 L2672.4,1073.6 L2678.6,1059.8 L2679,1148 L195,1148 Z" fill="#0c1122"/><rect x="2099" y="1028" width="580" height="120" fill="#080c1c"/><path d="M2099,1123.8 L2108.6,1124.3 L2120.3,1123.2 L2126.1,1119.2 L2143.6,1119.2 L2150.6,1118 L2157.6,1115 L2164.5,1109.7 L2176.2,1101.7 L2189,1106.4 L2200.6,1104.1 L2207.6,1109.7 L2213,1106.9 L2219.3,1092.9 L2225.1,1090.1 L2232.1,1091.7 L2243.7,1089.9 L2250.7,1089.9 L2256.6,1079.4 L2263.5,1086.4 L2269.4,1084 L2275.2,1087.1 L2282.2,1085.9 L2288,1080.8 L2294.5,1087.8 L2300.8,1076.6 L2312.5,1071.2 L2324.1,1075.9 L2332.3,1080.8 L2340.4,1080.8 L2350.9,1084.3 L2356.7,1084.3 L2362.5,1086.4 L2368.4,1080.1 L2374.6,1070.8 L2381.2,1089.4 L2387,1090.6 L2393.3,1096.4 L2399.8,1085.9 L2405.6,1081.2 L2412.6,1084.7 L2418.4,1090.1 L2425.4,1091.3 L2431.3,1090.6 L2448.7,1092.9 L2460.4,1091.3 L2467.4,1092.4 L2473.9,1096.4 L2480.9,1085.4 L2488.3,1084.7 L2498.8,1085.4 L2505.8,1091.7 L2511.1,1094.1 L2517.4,1077.8 L2524.4,1083.1 L2530.2,1092.9 L2536.1,1100.6 L2543,1106.2 L2555.9,1107.3 L2566.4,1106.4 L2574,1109.2 L2580.3,1106.2 L2586.2,1105.7 L2592,1095.7 L2597.8,1097.6 L2610.6,1074.3 L2616.5,1071.5 L2623.4,1062.6 L2630,1050.5 L2636.2,1051 L2642.1,1054.5 L2648.6,1071.5 L2658.4,1073.8 L2672.4,1073.6 L2678.6,1059.8 L2678.6,1148 L2099,1148 Z" fill="#222a45"/><path d="M195,1109.5 L200.1,1111.8 L207.1,1116.9 L214.1,1113.4 L219.9,1111.8 L225.7,1107.6 L238,1114.1 L244.3,1111.8 L251.3,1114.6 L257.2,1115.3 L264.1,1118.3 L271.1,1119.3 L280.4,1121.1 L292.1,1123 L300.2,1121.6 L308.4,1122.8 L320,1123.7 L348,1123 L383,1124.2 L441.2,1122.8 L462.1,1123.9 L499.4,1124.2 L750,1125 L880,1124.5 L913,1122.3 L940,1124.5 L1500,1124.5 L1900,1124.9 L1922,1124.9 L1939.7,1122.4 L1945.6,1124.6 L1967.5,1124 L1977.6,1121.9 L2018,1122.4 L2052,1122.9 L2090,1123.6 L2099,1123.8" fill="none" stroke="#3d5cae" stroke-width="1.2"/><path d="M2099,1123.8 L2108.6,1124.3 L2120.3,1123.2 L2126.1,1119.2 L2143.6,1119.2 L2150.6,1118 L2157.6,1115 L2164.5,1109.7 L2176.2,1101.7 L2189,1106.4 L2200.6,1104.1 L2207.6,1109.7 L2213,1106.9 L2219.3,1092.9 L2225.1,1090.1 L2232.1,1091.7 L2243.7,1089.9 L2250.7,1089.9 L2256.6,1079.4 L2263.5,1086.4 L2269.4,1084 L2275.2,1087.1 L2282.2,1085.9 L2288,1080.8 L2294.5,1087.8 L2300.8,1076.6 L2312.5,1071.2 L2324.1,1075.9 L2332.3,1080.8 L2340.4,1080.8 L2350.9,1084.3 L2356.7,1084.3 L2362.5,1086.4 L2368.4,1080.1 L2374.6,1070.8 L2381.2,1089.4 L2387,1090.6 L2393.3,1096.4 L2399.8,1085.9 L2405.6,1081.2 L2412.6,1084.7 L2418.4,1090.1 L2425.4,1091.3 L2431.3,1090.6 L2448.7,1092.9 L2460.4,1091.3 L2467.4,1092.4 L2473.9,1096.4 L2480.9,1085.4 L2488.3,1084.7 L2498.8,1085.4 L2505.8,1091.7 L2511.1,1094.1 L2517.4,1077.8 L2524.4,1083.1 L2530.2,1092.9 L2536.1,1100.6 L2543,1106.2 L2555.9,1107.3 L2566.4,1106.4 L2574,1109.2 L2580.3,1106.2 L2586.2,1105.7 L2592,1095.7 L2597.8,1097.6 L2610.6,1074.3 L2616.5,1071.5 L2623.4,1062.6 L2630,1050.5 L2636.2,1051 L2642.1,1054.5 L2648.6,1071.5 L2658.4,1073.8 L2672.4,1073.6 L2678.6,1059.8" fill="none" stroke="#7090d8" stroke-width="1.2"/><rect x="2086.9" y="1073.3" width="28.2" height="34.7" rx="11" fill="#000000" opacity="0.6" filter="url(#hs)"/><rect x="2086.9" y="1073.3" width="28.2" height="34.7" rx="10" fill="#363847"/><rect x="2096.7" y="1084.9" width="2.4" height="11.9" fill="#a3a8b6"/><rect x="2103.1" y="1084.9" width="2.4" height="11.9" fill="#a3a8b6"/><rect x="2662.9" y="1073.3" width="28.2" height="34.7" rx="11" fill="#000000" opacity="0.6" filter="url(#hs)"/><rect x="2662.9" y="1073.3" width="28.2" height="34.7" rx="10" fill="#363847"/><rect x="2672.7" y="1084.9" width="2.4" height="11.9" fill="#a3a8b6"/><rect x="2679.1" y="1084.9" width="2.4" height="11.9" fill="#a3a8b6"/><rect x="2793" y="1000.3" width="12" height="47.3" rx="5" fill="#4a4d55"/><rect x="66" y="331.6" width="117.5" height="44.7" rx="6" fill="#000000"/><text x="80.7" y="361.1" font-size="25" fill="#ffffff" stroke="#ffffff" stroke-width="0.5" textLength="87.7" lengthAdjust="spacingAndGlyphs">237.71M</text><rect x="2680.6" y="331.7" width="71.6" height="44" rx="6" fill="#000000"/><text x="2695" y="360.9" font-size="25" fill="#ffffff" stroke="#ffffff" stroke-width="0.5" textLength="43" lengthAdjust="spacingAndGlyphs">0.64</text><rect x="2547.7" y="993.5" width="227.3" height="44.2" rx="6" fill="#000000"/><text x="2562.8" y="1022.1" font-size="24.7" fill="#ffffff" stroke="#ffffff" stroke-width="0.5" textLength="197" lengthAdjust="spacingAndGlyphs">23 Feb 2026, 03:00</text><rect x="2113" y="425" width="446" height="210" rx="14" fill="#000000" opacity="0.7" filter="url(#tts)"/><rect x="2173" y="395.3" width="446" height="210.5" rx="16" fill="#030408"/><text x="2204" y="457.6" font-size="28.6" fill="#ffffff" stroke="#ffffff" stroke-width="0.55" textLength="247.5" lengthAdjust="spacingAndGlyphs">23 Feb 2026, 03:00</text><circle cx="2213" cy="511" r="8" fill="#e3b95e" stroke="#d8dde5" stroke-width="3.6"/><circle cx="2213" cy="555.2" r="8" fill="#5bc189" stroke="#d8dde5" stroke-width="3.6"/><text x="2232.3" y="521.3" font-size="27.8" fill="#d5dae3" stroke="#d5dae3" stroke-width="0.4" textLength="173" lengthAdjust="spacingAndGlyphs">PIPPIN Price</text><text x="2232.3" y="565.5" font-size="27.8" fill="#d5dae3" stroke="#d5dae3" stroke-width="0.4" textLength="185" lengthAdjust="spacingAndGlyphs">Open Interest</text><text x="2588" y="521.8" font-size="30.8" fill="#ffffff" stroke="#ffffff" stroke-width="0.6" text-anchor="end" textLength="70.5" lengthAdjust="spacingAndGlyphs">$0.62</text><text x="2588" y="565.8" font-size="30.8" fill="#ffffff" stroke="#ffffff" stroke-width="0.6" text-anchor="end" textLength="128" lengthAdjust="spacingAndGlyphs">$244.63M</text></svg></div></body></html>
